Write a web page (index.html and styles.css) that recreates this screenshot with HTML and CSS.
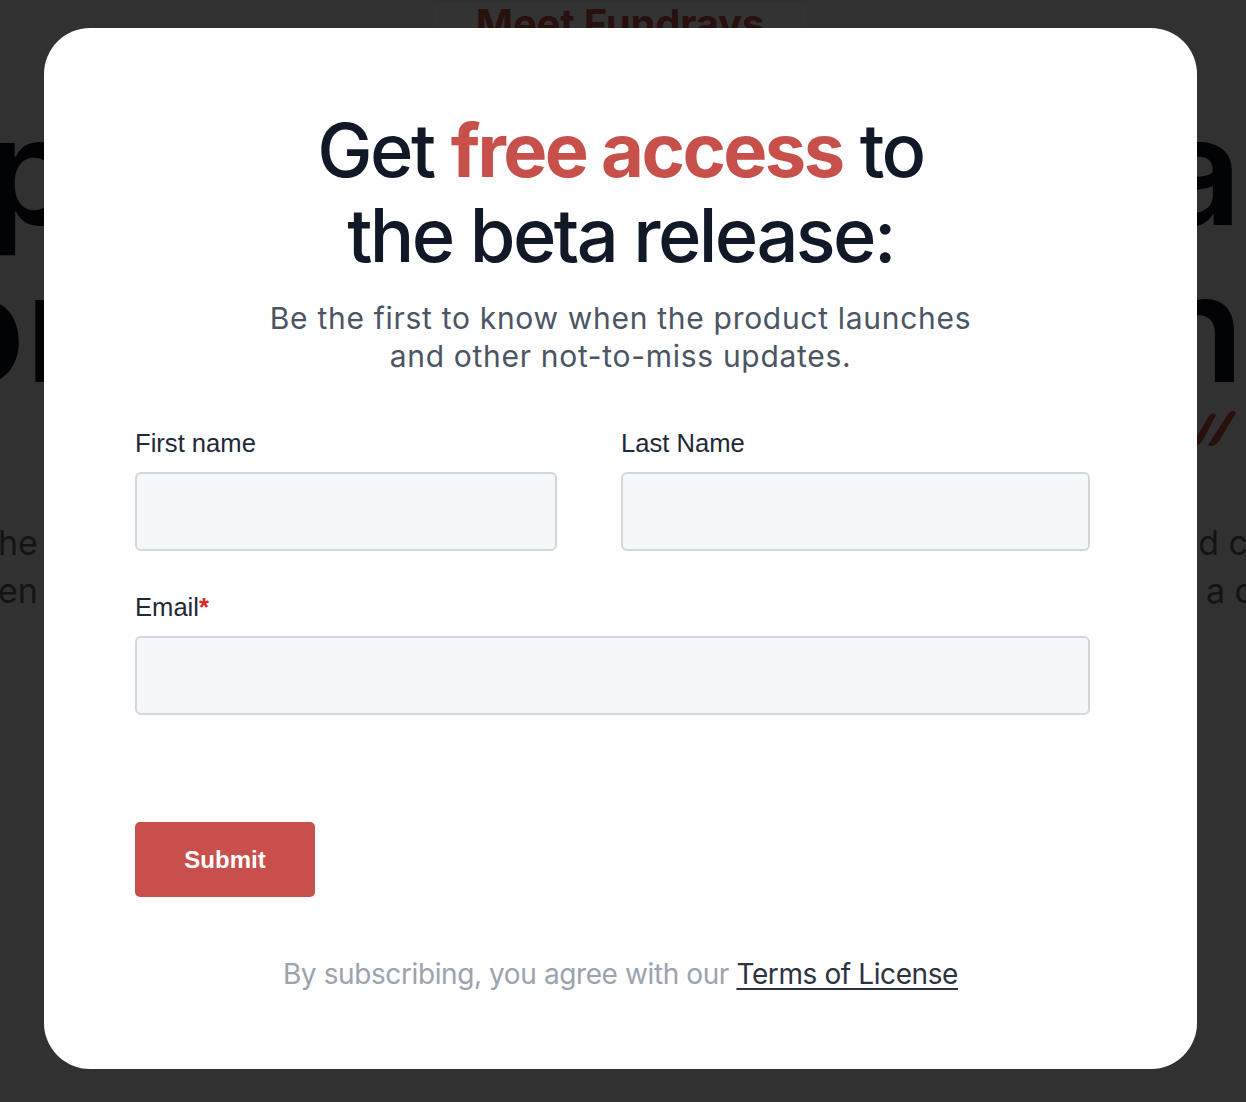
FILE: index.html
```html
<!DOCTYPE html>
<html lang="en">
<head>
<meta charset="utf-8">
<title>Get free access to the beta release</title>
<link rel="stylesheet" href="styles.css">
</head>
<body>
<div class="page">
  <div class="badge-row"><span class="badge">Meet Fundrays</span></div>
  <div class="hero-title">
    <div class="hero-row"><span class="lead-1">p</span><span>a</span></div>
    <div class="hero-row"><span class="lead-2">or</span><span class="tail-2">n</span></div>
  </div>
  <div class="swoosh-row">
    <svg class="swoosh" width="44" height="40" viewBox="0 0 44 40">
      <path d="M1 37 L17 10 Q21 5 24 9 L11 34 Q6 42 1 37 Z" fill="#c8504b"/>
      <path d="M16 39 L36 8 Q41 2 44 7 L27 35 Q21 43 16 39 Z" fill="#c8504b"/>
    </svg>
  </div>
  <div class="hero-text">
    <div class="text-row"><span>he</span><span>d c</span></div>
    <div class="text-row"><span>en</span><span class="tail-text">a c</span></div>
  </div>
</div>

<div class="overlay">
  <div class="modal">
    <h1 class="title">Get <span class="accent">free access</span> to<br>the beta release:</h1>
    <p class="subtitle">Be the first to know when the product launches<br>and other not-to-miss updates.</p>
    <form class="form">
      <div class="name-grid">
        <label class="field">
          <span class="label">First name</span>
          <input class="input" type="text">
        </label>
        <label class="field">
          <span class="label">Last Name</span>
          <input class="input" type="text">
        </label>
      </div>
      <label class="field">
        <span class="label">Email<span class="req">*</span></span>
        <input class="input" type="email">
      </label>
      <button class="submit" type="button">Submit</button>
    </form>
    <p class="terms">By subscribing, you agree with our <a class="terms-link" href="#">Terms of License</a></p>
  </div>
</div>
</body>
</html>
```

FILE: styles.css
```css
* { box-sizing: border-box; }

html, body {
  margin: 0;
  padding: 0;
}

body {
  width: 1246px;
  height: 1102px;
  overflow: hidden;
  font-family: "Inter", "Noto Sans", sans-serif;
}

/* background page */
.page {
  height: 1102px;
  overflow: hidden;
  background: #f6f6f6;
  padding-top: 2px;
}

.badge-row {
  display: flex;
  justify-content: center;
}

.badge {
  display: block;
  width: 374px;
  margin-left: -6px;
  background: #ffffff;
  text-align: center;
  font-weight: 700;
  font-size: 40px;
  line-height: 44px;
  color: #c8504b;
  letter-spacing: -0.2px;
}

.hero-title {
  margin-top: 46px;
  font-size: 150px;
  line-height: 157px;
  font-weight: 600;
  color: #0d0f14;
}

.hero-row {
  display: flex;
  justify-content: space-between;
  margin: 0 4px 0 -14px;
}

.lead-2 { margin-left: -52px; }
.tail-2 { margin-right: -2px; }

.swoosh-row {
  display: flex;
  justify-content: flex-end;
  height: 40px;
  padding-right: 10px;
}

.hero-text {
  margin-top: 73px;
  font-size: 34px;
  line-height: 48px;
  color: #666666;
}

.text-row {
  display: flex;
  justify-content: space-between;
  margin: 0 -2px 0 -2px;
}

.tail-text { margin-right: -6px; }

/* overlay + modal */
.overlay {
  position: fixed;
  inset: 0;
  background: rgba(0, 0, 0, 0.8);
  padding: 28px 0 0 44px;
}

.modal {
  width: 1153px;
  height: 1041px;
  background: #fefefe;
  border-radius: 46px;
  padding-top: 80px;
  display: flex;
  flex-direction: column;
  align-items: center;
}

.title {
  margin: 0;
  font-family: "Inter", sans-serif;
  font-weight: 500;
  font-size: 74px;
  line-height: 85px;
  letter-spacing: -2.6px;
  color: #111827;
  text-align: center;
}

.accent {
  color: #c8504b;
  font-weight: 700;
}

.subtitle {
  margin: 21px 0 0;
  font-size: 30px;
  line-height: 38px;
  color: #4b5563;
  text-align: center;
  letter-spacing: 0.7px;
}

.form {
  align-self: flex-start;
  margin: 53px 0 0 91px;
  width: 955px;
  display: flex;
  flex-direction: column;
  gap: 41px;
  font-family: "Liberation Sans", Arial, sans-serif;
}

.name-grid {
  display: grid;
  grid-template-columns: 422px 469px;
  column-gap: 64px;
}

.field {
  display: flex;
  flex-direction: column;
  gap: 14px;
}

.label {
  font-size: 25.6px;
  line-height: 30px;
  color: #1f2937;
}

.req {
  color: #dc2626;
  font-weight: 700;
}

.input {
  height: 79px;
  width: 100%;
  background: #f5f7f9;
  border: 2px solid #cfd7e1;
  border-radius: 6px;
  margin: 0;
  font-size: 24px;
}

.submit {
  margin-top: 66px;
  width: 180px;
  height: 75px;
  border: none;
  border-radius: 5px;
  background: #c84f4b;
  color: #ffffff;
  font-family: "Liberation Sans", Arial, sans-serif;
  font-weight: 700;
  font-size: 24px;
}

.terms {
  margin: 59px 0 0;
  font-size: 28px;
  line-height: 36px;
  color: #9ca3af;
  text-align: center;
  letter-spacing: -0.4px;
}

.terms-link {
  color: #2d3340;
  text-decoration: underline;
  text-decoration-thickness: 2px;
  text-underline-offset: 4px;
}
```
